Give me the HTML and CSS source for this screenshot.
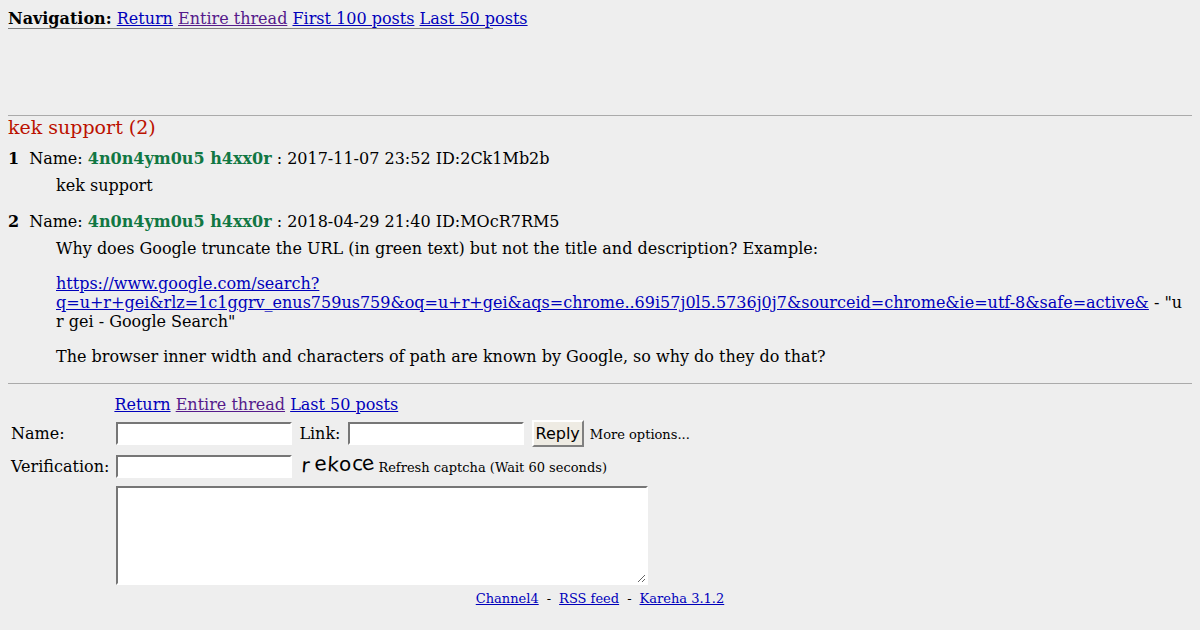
FILE: index.html
```
<!DOCTYPE html>
<html lang="en">
<head>
<meta charset="utf-8">
<title>kek support</title>
<link rel="stylesheet" href="styles.css">
</head>
<body>
<nav class="navigation">
  <strong>Navigation:</strong>
  <a href="#board">Return</a>
  <a class="visited" href="#thread">Entire thread</a>
  <a href="#first">First 100 posts</a>
  <a href="#last">Last 50 posts</a>
</nav>

<main class="thread" id="thread">
  <h1 class="title">kek support (2)</h1>
  <article class="post">
    <header class="post-head"><span class="number">1</span><span>Name: <b class="poster">4n0n4ym0u5 h4xx0r</b> : 2017-11-07 23:52 ID:2Ck1Mb2b</span></header>
    <div class="post-text"><p>kek support</p></div>
  </article>
  <article class="post">
    <header class="post-head"><span class="number">2</span><span>Name: <b class="poster">4n0n4ym0u5 h4xx0r</b> : 2018-04-29 21:40 ID:MOcR7RM5</span></header>
    <div class="post-text">
      <p>Why does Google truncate the URL (in green text) but not the title and description? Example:</p>
      <p><a href="#search">https://www.google.com/search?<wbr>q=u+r+gei&amp;rlz=1c1ggrv_enus759us759&amp;oq=u+r+gei&amp;aqs=chrome..69i57j0l5.5736j0j7&amp;sourceid=chrome&amp;ie=utf-8&amp;safe=active&amp;</a> - "u r gei - Google Search"</p>
      <p>The browser inner width and characters of path are known by Google, so why do they do that?</p>
    </div>
  </article>
</main>

<form class="reply">
  <div class="reply-links">
    <a href="#board">Return</a>
    <a class="visited" href="#thread">Entire thread</a>
    <a href="#last">Last 50 posts</a>
  </div>
  <label for="name">Name:</label>
  <div class="fields">
    <input class="box" id="name" type="text">
    <label class="link-label" for="link">Link:</label>
    <input class="box" id="link" type="text">
    <button class="submit" type="button">Reply</button>
    <span class="small">More options...</span>
  </div>
  <label for="captcha">Verification:</label>
  <div class="fields">
    <input class="box" id="captcha" type="text">
    <svg class="captcha" width="78" height="26" viewBox="0 0 78 26" role="img" aria-label="Captcha">
      <text x="1 15 27 39 52 63" y="20 19 19 19 18 19" rotate="4 -6 3 0 2 -10">rekoce</text>
    </svg>
    <span class="small">Refresh captcha (Wait 60 seconds)</span>
  </div>
  <textarea class="message" aria-label="Message"></textarea>
</form>

<footer class="footer">
  <a href="#channel4">Channel4</a><span>-</span><a href="#rss">RSS feed</a><span>-</span><a href="#kareha">Kareha 3.1.2</a>
</footer>
</body>
</html>
```

FILE: styles.css
```
body {
  margin: 8px;
  background: #eee;
  color: #000;
  font: 16px/19px "DejaVu Serif", serif;
}

a {
  color: #0000bb;
}

a.visited {
  color: #551a8b;
}

.navigation {
  width: 41%;
  padding-top: 1px;
  border-bottom: 1px solid #808080;
  white-space: nowrap;
}

.thread {
  margin-top: 86px;
  padding-bottom: 17px;
  border-top: 1px solid #aaa;
  border-bottom: 1px solid #aaa;
}

.title {
  margin: 0;
  color: #bb1100;
  font-size: 19px;
  font-weight: normal;
  line-height: 22px;
}

.post {
  margin-top: 11px;
}

.post + .post {
  margin-top: 17px;
}

.post-head {
  display: flex;
  gap: 10px;
}

.number {
  font-weight: bold;
}

.poster {
  color: #117743;
}

.post-text {
  margin: 8px 0 0 48px;
}

.post-text p {
  margin: 0 0 16px;
}

.post-text p:last-child {
  margin-bottom: 0;
}

.reply {
  display: grid;
  grid-template-columns: auto 1fr;
  align-items: center;
  column-gap: 5px;
  margin: 11px 3px 0;
}

.reply-links,
.message {
  grid-column: 2;
}

.fields {
  display: flex;
  align-items: center;
  min-height: 33px;
  padding-left: 2px;
}

.reply-links + label + .fields {
  margin-top: 3px;
}

.reply-links + label {
  margin-top: 3px;
}

.box {
  box-sizing: border-box;
  width: 176px;
  height: 23px;
  margin: 0;
  border: 2px solid;
  border-color: #767676 #fff #fff #767676;
  background: #fff;
  font: 13px "DejaVu Sans", sans-serif;
}

.link-label {
  margin: 0 7px;
}

.submit {
  margin: 0 6px 0 8px;
  padding: 2px;
  border: 2px solid;
  border-color: #fff #808080 #808080 #fff;
  background: #eeebe3;
  color: #000;
  font: 16px/19px "DejaVu Sans", sans-serif;
}

.small {
  padding-top: 2px;
  font-size: 13px;
}

.captcha {
  margin: 0 0 3px 8px;
  overflow: visible;
  font: 20px "DejaVu Sans", sans-serif;
}

.message {
  box-sizing: border-box;
  width: 532px;
  max-width: 100%;
  height: 99px;
  margin: 3px 0 0 2px;
  border: 2px solid;
  border-color: #767676 #fff #fff #767676;
  background: #fff;
  font: 13px "DejaVu Sans", sans-serif;
}

.footer {
  display: flex;
  justify-content: center;
  gap: 8px;
  margin-top: 4px;
  font-size: 13px;
}
```
